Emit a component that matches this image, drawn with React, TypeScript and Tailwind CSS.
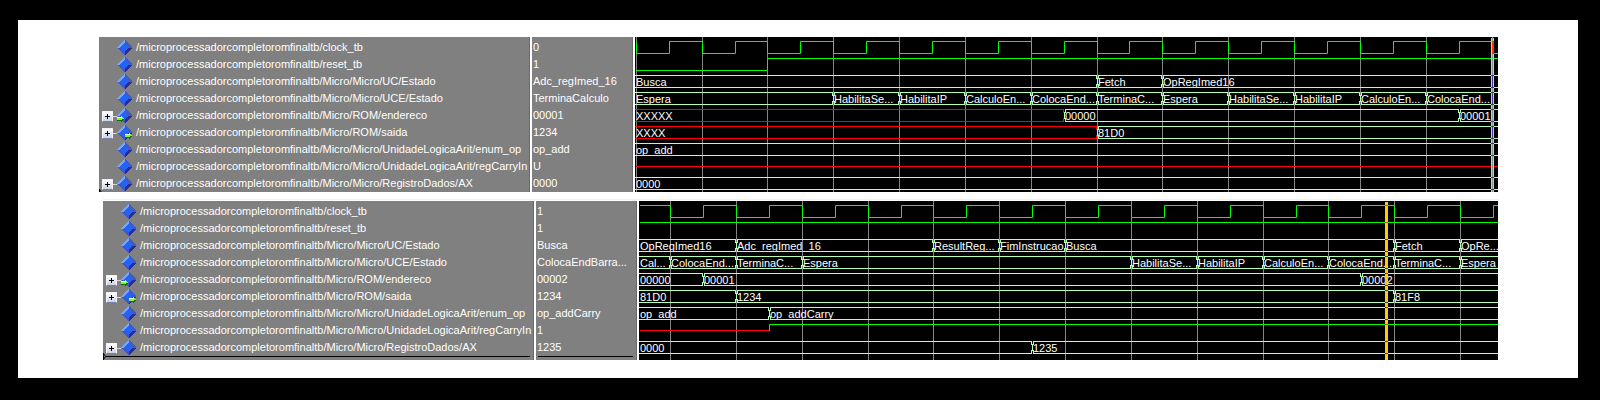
type Port = "in" | "out";
type Signal = { name: string; value: string; expandable?: boolean; port?: Port };
type Segment = { from: number; label: string; unknown?: boolean };
type Trace =
  | { kind: "bus"; segments: Segment[] }
  | { kind: "bit"; parts: { color: string; d: string }[] };
type Chart = {
  origin: number;
  end: number;
  height: number;
  grid: number[];
  traces: Trace[];
};

const ROW = 17;
const HIGH = 4;
const MID = 10;
const LOW = 16;
const GREEN = "#00ff00";
const PALE = "#b4ffb4";
const RED = "#ff0000";

const root = "/microprocessadorcompletoromfinaltb";

const signals = (values: string[]): Signal[] => [
  { name: `${root}/clock_tb`, value: values[0] },
  { name: `${root}/reset_tb`, value: values[1] },
  { name: `${root}/Micro/Micro/UC/Estado`, value: values[2] },
  { name: `${root}/Micro/Micro/UCE/Estado`, value: values[3] },
  { name: `${root}/Micro/ROM/endereco`, value: values[4], expandable: true, port: "in" },
  { name: `${root}/Micro/ROM/saida`, value: values[5], expandable: true, port: "out" },
  { name: `${root}/Micro/Micro/UnidadeLogicaArit/enum_op`, value: values[6] },
  { name: `${root}/Micro/Micro/UnidadeLogicaArit/regCarryIn`, value: values[7] },
  { name: `${root}/Micro/Micro/RegistroDados/AX`, value: values[8], expandable: true },
];

const clock = (start: string, edges: number[], firstUp: boolean, end: number) => {
  let up = firstUp;
  let d = start;
  for (const x of edges) {
    d += ` H${x} V${up ? HIGH : LOW}`;
    up = !up;
  }
  return `${d} H${end}`;
};

const bus = (...segments: Segment[]): Trace => ({ kind: "bus", segments });
const seg = (from: number, label: string, unknown = false): Segment => ({ from, label, unknown });

const first: Chart = {
  origin: 635,
  end: 1498,
  height: 155,
  grid: [636, 702, 767, 833, 899, 965, 1031, 1097, 1162, 1228, 1294, 1360, 1426, 1492],
  traces: [
    {
      kind: "bit",
      parts: [
        {
          color: GREEN,
          d: clock(
            `M636 ${HIGH} V${LOW}`,
            [669, 702, 735, 767, 800, 833, 866, 899, 932, 965, 998, 1031, 1064, 1097, 1129, 1162, 1195, 1228, 1261, 1294, 1327, 1360, 1393, 1426, 1459, 1492],
            true,
            1498,
          ),
        },
      ],
    },
    { kind: "bit", parts: [{ color: GREEN, d: `M636 ${LOW} H767 V${HIGH} H1498` }] },
    bus(seg(635, "Busca"), seg(1097, "Fetch"), seg(1162, "OpRegImed16")),
    bus(
      seg(635, "Espera"),
      seg(833, "HabilitaSe..."),
      seg(899, "HabilitaIP"),
      seg(965, "CalculoEn..."),
      seg(1031, "ColocaEnd..."),
      seg(1097, "TerminaC..."),
      seg(1162, "Espera"),
      seg(1228, "HabilitaSe..."),
      seg(1294, "HabilitaIP"),
      seg(1360, "CalculoEn..."),
      seg(1426, "ColocaEnd..."),
      seg(1492, ""),
    ),
    bus(seg(635, "XXXXX", true), seg(1064, "00000"), seg(1459, "00001")),
    bus(seg(635, "XXXX", true), seg(1097, "81D0")),
    bus(seg(635, "op_add")),
    { kind: "bit", parts: [{ color: RED, d: `M636 ${MID} H1498` }] },
    bus(seg(635, "0000")),
  ],
};

const second: Chart = {
  origin: 639,
  end: 1498,
  height: 159,
  grid: [670, 736, 802, 868, 933, 999, 1065, 1131, 1197, 1263, 1328, 1394, 1460],
  traces: [
    {
      kind: "bit",
      parts: [
        {
          color: GREEN,
          d: clock(
            `M640 ${HIGH}`,
            [670, 703, 736, 769, 802, 835, 868, 901, 933, 966, 999, 1032, 1065, 1098, 1131, 1164, 1197, 1230, 1263, 1296, 1328, 1361, 1394, 1427, 1460, 1493],
            false,
            1498,
          ),
        },
      ],
    },
    { kind: "bit", parts: [{ color: GREEN, d: `M640 ${HIGH} H1498` }] },
    bus(
      seg(639, "OpRegImed16"),
      seg(736, "Adc_regImed_16"),
      seg(933, "ResultReg..."),
      seg(999, "FimInstrucao"),
      seg(1065, "Busca"),
      seg(1394, "Fetch"),
      seg(1460, "OpRe..."),
    ),
    bus(
      seg(639, "Cal..."),
      seg(670, "ColocaEnd..."),
      seg(736, "TerminaC..."),
      seg(802, "Espera"),
      seg(1131, "HabilitaSe..."),
      seg(1197, "HabilitaIP"),
      seg(1263, "CalculoEn..."),
      seg(1328, "ColocaEnd..."),
      seg(1394, "TerminaC..."),
      seg(1460, "Espera"),
    ),
    bus(seg(639, "00000"), seg(703, "00001"), seg(1361, "00002")),
    bus(seg(639, "81D0"), seg(736, "1234"), seg(1394, "81F8")),
    bus(seg(639, "op_add"), seg(769, "op_addCarry")),
    {
      kind: "bit",
      parts: [
        { color: RED, d: `M640 ${MID} H769` },
        { color: GREEN, d: `M769 ${MID} V${HIGH} H1498` },
      ],
    },
    bus(seg(639, "0000"), seg(1032, "1235")),
  ],
};

function Diamond({ port }: { port?: Port }) {
  return (
    <svg className="h-[15px] w-[15px] shrink-0" viewBox="0 0 15 15" shapeRendering="crispEdges" aria-hidden="true">
      <path d="M7.5 -.5V7.5H-.5z" fill="#79a5f6" />
      <path d="M7.5 -.5 15.5 7.5H7.5z" fill="#3f5bc4" />
      <path d="M-.5 7.5 7.5 15.5V7.5z" fill="#3c58cc" />
      <path d="M15.5 7.5 7.5 15.5V7.5z" fill="#2a2a9e" />
      <path d="M7.5 3 12 7.5 7.5 12 3 7.5z" fill="#2364f6" />
      {port && (
        <g transform={port === "in" ? "translate(0 7)" : "translate(8 7)"}>
          <path d="M0 2.5h3.5V0L7.5 4 3.5 8V5.5H0z" fill="#0b6b08" />
          <path d="M0 2h3.5V0L7 3.6 4.6 5H0z" fill="#7dff1c" />
          <path d="M0 2h3.5V.6L5.6 3H0z" fill="#f4ffd8" />
        </g>
      )}
    </svg>
  );
}

function Expander({ name }: { name: string }) {
  return (
    <>
      <button
        type="button"
        aria-label={`Expand ${name}`}
        className="mt-0.5 flex h-[11px] w-[11px] shrink-0 items-center justify-center rounded-[1px] border border-[#f4f4f8] border-b-[#7483a4] bg-linear-to-b from-white to-[#cdd3e8]"
      >
        <svg className="h-[5px] w-[5px]" viewBox="0 0 5 5" shapeRendering="crispEdges" aria-hidden="true">
          <path d="M0 2h5v1H0zM2 0h1v5H2z" fill="#000" />
        </svg>
      </button>
      <span className="mt-0.5 h-px grow bg-[#d8d8d8]" />
    </>
  );
}

function SignalTable({ rows, footer }: { rows: Signal[]; footer?: boolean }) {
  const pane = "border-r-2 border-white bg-[#808080] p-0 shadow-[inset_-1px_0_0_#6a6a6a]";
  return (
    <table className="shrink-0 table-fixed border-separate border-spacing-0 text-left">
      <tbody>
        {rows.map((s, i) => (
          <tr key={s.name}>
            <th scope="row" className={`${pane} w-[433px] font-normal ${i === 0 ? "pt-0.5" : ""}`}>
              <div className="flex h-[17px] items-center pl-[3px]">
                <span className="flex w-[15px] shrink-0 items-center">
                  {s.expandable && <Expander name={s.name} />}
                </span>
                <Diamond port={s.port} />
                <span className="pl-1 whitespace-nowrap">{s.name}</span>
              </div>
            </th>
            <td className={`${pane} w-[103px] ${i === 0 ? "pt-0.5" : ""}`}>
              <div className="h-[17px] pl-px leading-[17px] whitespace-nowrap">{s.value}</div>
            </td>
          </tr>
        ))}
      </tbody>
      {footer && (
        <tfoot>
          <tr>
            <td className={pane}>
              <div className="flex h-1">
                <span className="mr-1 ml-[3px] h-px grow bg-black" />
              </div>
            </td>
            <td className={pane}>
              <div className="flex h-1">
                <span className="mr-1 ml-0.5 h-px grow bg-black" />
              </div>
            </td>
          </tr>
        </tfoot>
      )}
    </table>
  );
}

function InsertMarker({ clipped }: { clipped?: boolean }) {
  return (
    <svg
      className={clipped ? "absolute bottom-0 left-0 h-[3px] w-[3px]" : "absolute bottom-0 left-0 h-[7px] w-[3px]"}
      viewBox={clipped ? "0 0 3 3" : "0 0 3 7"}
      aria-hidden="true"
    >
      <path d="M.5 0V7M.5 .5 2.5 3.5 .5 6.5" fill="none" stroke="#000" />
    </svg>
  );
}

function BusTrace({ segments, end }: { segments: Segment[]; end: number }) {
  return (
    <>
      {segments.map((s, i) => {
        const next = segments[i + 1]?.from;
        const left = i === 0 ? s.from : s.from + 1;
        const right = next === undefined ? end : next - 1;
        let d = `M${left} ${HIGH} H${right} M${left} ${LOW} H${right}`;
        if (i > 0) d += ` M${left} ${HIGH} V${HIGH + 3} M${s.from} ${HIGH + 3} V${LOW - 3} M${left} ${LOW - 3} V${LOW}`;
        if (next !== undefined) d += ` M${right} ${HIGH} V${HIGH + 3} M${right} ${LOW - 3} V${LOW}`;
        return <path key={s.from} d={d} stroke={s.unknown ? RED : PALE} />;
      })}
    </>
  );
}

function WaveChart({ chart, mixedCursor }: { chart: Chart; mixedCursor?: boolean }) {
  const { origin, end, height, grid, traces } = chart;
  const width = end - origin;
  const cursor = mixedCursor ? 1491 : 1385;
  const crossings = traces.flatMap((t, i) =>
    t.kind === "bus" ? [HIGH + i * ROW, LOW + i * ROW] : [],
  );
  return (
    <svg
      width={width}
      height={height}
      viewBox={`${origin} 0 ${width} ${height}`}
      className="block shrink-0"
      role="img"
      aria-label="Waveforms"
    >
      <g transform="translate(0.5 0.5)" fill="none" strokeWidth="1" strokeLinecap="square">
        {grid.map((x) => (
          <path key={x} d={`M${x} 0 V${height}`} stroke="#848484" />
        ))}
      </g>
      {traces.map(
        (t, i) =>
          t.kind === "bus" && (
            <svg key={i} x={origin} y={i * ROW + HIGH} width={width} height={LOW - HIGH}>
              {t.segments.map((s) => (
                <text key={s.from} x={s.from - origin + 1} y={11} fill="#fff">
                  {s.label}
                </text>
              ))}
            </svg>
          ),
      )}
      <g transform="translate(0.5 0.5)" fill="none" strokeWidth="1" strokeLinecap="square">
        {traces.map((t, i) => (
          <g key={i} transform={`translate(0 ${i * ROW})`}>
            {t.kind === "bus" ? (
              <BusTrace segments={t.segments} end={end} />
            ) : (
              t.parts.map((p) => <path key={p.d} d={p.d} stroke={p.color} />)
            )}
          </g>
        ))}
      </g>
      <rect x={cursor} y="1" width="3" height={height - 1} fill={mixedCursor ? "#f0d428" : "#ffcc00"} />
      {mixedCursor && (
        <>
          <rect x="1492" y="1" width="1" height={height - 1} fill="#7b9a94" />
          <rect x="1492" y={HIGH} width="2" height={LOW - HIGH + 1} fill="#ff3300" />
          {[0, 1, 3].map((k) => (
            <rect key={k} x="1492" y={HIGH + (k + 2) * ROW} width="1" height="13" fill="#4b33b0" />
          ))}
        </>
      )}
      {crossings.map((y) => (
        <rect key={y} x={cursor} y={y} width="3" height="1" fill="#4b334b" />
      ))}
      {!mixedCursor && (
        <g fill="#ff3300">
          <rect x={cursor} y={HIGH} width="3" height="1" />
          <rect x={cursor} y={HIGH + ROW} width="3" height="1" />
          <rect x={cursor} y={HIGH + 7 * ROW} width="3" height="1" />
        </g>
      )}
    </svg>
  );
}

export default function App() {
  return (
    <div className="bg-black pt-5 pr-[22px] pb-[22px] pl-[18px] font-['Liberation_Sans',Arial,sans-serif] text-[11px] leading-[17px] text-white">
      <main className="bg-white pt-[17px] pr-20 pb-[18px] pl-[81px]">
        <section aria-label="First capture" className="relative flex overflow-hidden">
          <SignalTable rows={signals(["0", "1", "Adc_regImed_16", "TerminaCalculo", "00001", "1234", "op_add", "U", "0000"])} />
          <div className="min-w-0 grow overflow-hidden bg-black">
            <WaveChart chart={first} mixedCursor />
          </div>
          <InsertMarker clipped />
        </section>
        <div className="mt-[7px] ml-1 h-0.5 border-t border-[#efefef]" />
        <section aria-label="Second capture" className="relative ml-1 flex overflow-hidden">
          <SignalTable
            footer
            rows={signals(["1", "1", "Busca", "ColocaEndBarra...", "00002", "1234", "op_addCarry", "1", "1235"])}
          />
          <div className="min-w-0 grow overflow-hidden bg-black">
            <WaveChart chart={second} />
          </div>
          <InsertMarker />
        </section>
      </main>
    </div>
  );
}
